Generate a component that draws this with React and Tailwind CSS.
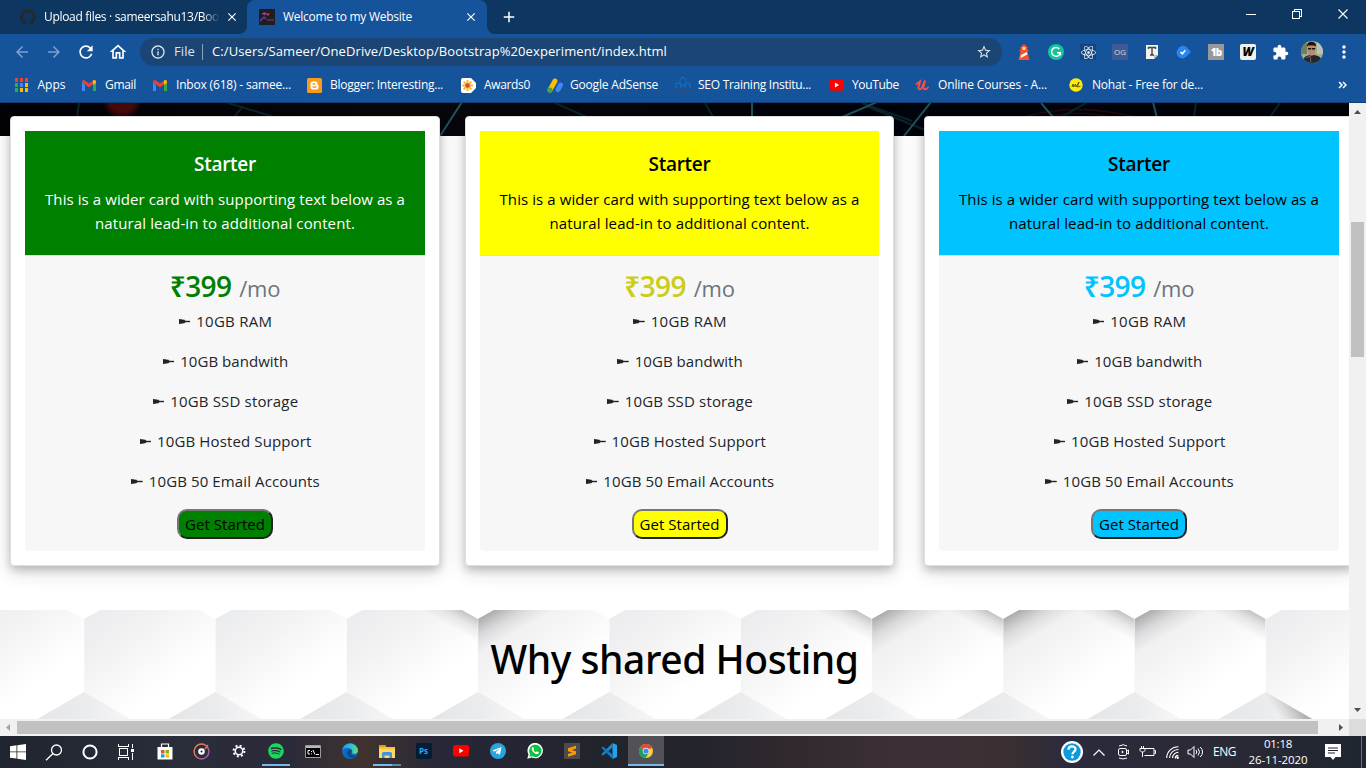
import React, { useLayoutEffect, useRef, useState } from "react";
import {
  MdArrowBack, MdArrowForward, MdRefresh, MdOutlineHome, MdStarBorder, MdInfoOutline,
  MdExtension, MdClose, MdAdd, MdMoreVert,
} from "react-icons/md";
import { FaGithub, FaSpotify, FaReact, FaTelegramPlane } from "react-icons/fa";

/* One line of text whose tracking is tuned so that it spans `w` pixels. */
function Fit({ w, className = "", children }) {
  const ref = useRef(null);
  const [ls, setLs] = useState(0);
  useLayoutEffect(() => {
    const el = ref.current;
    el.style.letterSpacing = "0px";
    const natural = el.getBoundingClientRect().width;
    const next = (w - natural) / el.textContent.length;
    el.style.letterSpacing = `${next}px`;
    setLs(next);
  }, [w]);
  return (
    <span ref={ref} className={`inline-block shrink-0 whitespace-nowrap ${className}`} style={{ letterSpacing: `${ls}px` }}>
      {children}
    </span>
  );
}

/* ---------- browser window ---------- */

function TabStrip() {
  return (
    <div className="flex h-[34px] shrink-0 bg-[#0d3660] text-white">
      <div className="flex w-[247px] items-center pl-5">
        <FaGithub className="size-4 shrink-0 text-[#24292e]" />
        <div className="ml-2 w-[176px] overflow-hidden text-xs [mask-image:linear-gradient(90deg,#000_90%,transparent)]">
          <Fit w={175}>Upload files · sameersahu13/Boo</Fit>
        </div>
        <MdClose className="ml-[5px] size-[14px] shrink-0" />
      </div>
      <div className="relative flex w-[240px] items-center rounded-t-lg bg-[#15539a] pl-3">
        <svg className="absolute -left-2 bottom-0 size-2" viewBox="0 0 8 8"><path d="M8 0v8H0a8 8 0 0 0 8-8z" fill="#15539a" /></svg>
        <svg className="absolute -right-2 bottom-0 size-2" viewBox="0 0 8 8"><path d="M0 0v8h8a8 8 0 0 1-8-8z" fill="#15539a" /></svg>
        <svg className="size-4 shrink-0" viewBox="0 0 16 16">
          <rect width="16" height="16" fill="#1f1d24" />
          <path d="M1 12l4-4 2 2" stroke="#7a3cb0" strokeWidth="1.2" fill="none" />
          <path d="M3 5l3-1 3 2 1-2" stroke="#d8344f" strokeWidth="1.3" fill="none" />
          <path d="M4 4l2 2" stroke="#5063e0" strokeWidth="1.2" />
          <path d="M8 11h7" stroke="#98403f" />
        </svg>
        <Fit w={129} className="ml-2 text-xs">Welcome to my Website</Fit>
        <MdClose className="ml-[52px] size-[14px] shrink-0" />
      </div>
      <div className="flex flex-1 items-center pl-[13px]">
        <MdAdd className="size-[18px]" />
      </div>
      <div className="flex items-start pt-2 pr-[10px]">
        <svg width="116" height="14" viewBox="0 0 116 14" fill="none" stroke="#fff" shapeRendering="crispEdges">
          <path d="M6 6.500h10" />
          <path d="M52.500 3.500h7v7h-7zM54.500 3.500v-2h7v7h-2" />
          <path d="M98.500 1.500l9 9m0-9l-9 9" shapeRendering="auto" strokeWidth="1.1" />
        </svg>
      </div>
    </div>
  );
}

function Extensions() {
  return (
    <div className="ml-[6px] flex items-center text-white">
      <div className="flex w-8 justify-center">
        <svg width="16" height="16" viewBox="0 0 16 16">
          <path d="M4.500 3L8 0l3.500 3v3h1v1.500h-1L13.500 16h-11l2-8.500h-1V6h1z" fill="#f4512c" />
          <rect x="6.500" y="3" width="3" height="3" fill="#ffdf7a" />
          <path d="M5 11l6-3 .3 2.500L4.600 14z" fill="#fff" />
        </svg>
      </div>
      <div className="flex w-8 justify-center">
        <svg width="16" height="16" viewBox="0 0 16 16">
          <circle cx="8" cy="8" r="8" fill="#15c39a" />
          <path d="M11.300 5A4.400 4.400 0 1 0 12.300 8.800H9M12.400 8.800v2.700" stroke="#fff" strokeWidth="1.400" fill="none" />
        </svg>
      </div>
      <div className="flex w-8 justify-center"><div className="flex size-4 items-center justify-center bg-[#134580]"><FaReact className="size-[15px]" /></div></div>
      <div className="flex w-8 justify-center"><div className="flex size-4 items-center justify-center rounded-[2px] bg-[#405a94] text-[8px] text-[#cdd6e8]">OG</div></div>
      <div className="flex w-8 justify-center">
        <svg width="14" height="16" viewBox="0 0 14 16">
          <path d="M1 1h12v10l-4 4H1z" fill="#f2f2f2" /><path d="M9 15v-4h4z" fill="#b9bfc6" />
          <path d="M3.500 5V3.500h7V5M7 3.500V11M5 11h4" stroke="#444" strokeWidth="1.400" fill="none" />
        </svg>
      </div>
      <div className="flex w-8 justify-center">
        <svg width="16" height="14" viewBox="0 0 16 14">
          <path d="M2 4a5.500 5.500 0 0 1 8.500-2L15 7l-4.500 4.500A5.600 5.600 0 0 1 2 4z" fill="#2486f0" />
          <path d="M4.500 7l1.800 1.800 3-3.500" stroke="#fff" strokeWidth="1.500" fill="none" />
        </svg>
      </div>
      <div className="flex w-8 justify-center"><div className="flex size-4 items-center justify-center bg-[#999] text-[10px] font-extrabold tracking-[-1px]">1b</div></div>
      <div className="flex w-8 justify-center"><div className="flex size-4 items-center justify-center rounded-[2px] bg-[#f0f0f0] text-[12px] font-extrabold text-black italic">W</div></div>
      <div className="flex w-8 justify-center"><MdExtension className="size-[17px]" /></div>
      <div className="flex w-8 justify-center">
        <svg width="22" height="22" viewBox="0 0 22 22">
          <defs><clipPath id="avatar"><circle cx="11" cy="11" r="11" /></clipPath></defs>
          <g clipPath="url(#avatar)">
            <rect width="22" height="22" fill="#9fae8d" />
            <rect width="6" height="13" fill="#6f8060" /><rect x="16" width="6" height="13" fill="#b9c3bb" />
            <path d="M2 22c0-6 3-8 9-8s10 2 10 8z" fill="#20252e" />
            <path d="M7 5h7v6c0 5-7 5-7 0z" fill="#c08868" />
            <path d="M6 6c-1-7 10-7 9-.5L13 4.500H7z" fill="#171313" />
            <path d="M7 7h3.200v1.600H7zM11 7h3.200v1.600H11z" fill="#111" />
            <path d="M5 17l4-2 1 6" stroke="#60707c" fill="none" />
          </g>
        </svg>
      </div>
      <div className="flex w-8 justify-center"><MdMoreVert className="size-5" /></div>
    </div>
  );
}

function Toolbar() {
  return (
    <div className="flex h-9 shrink-0 items-center bg-[#15539a] text-white">
      <MdArrowBack className="ml-[13px] size-[18px] text-[#7ea2cc]" />
      <MdArrowForward className="ml-[14px] size-[18px] text-[#7ea2cc]" />
      <MdRefresh className="ml-[13px] size-[20px]" />
      <MdOutlineHome className="ml-[12px] size-[20px]" />
      <div className="ml-[12px] flex h-7 w-[862px] items-center rounded-full bg-[#1a4574] pl-[10px]">
        <MdInfoOutline className="size-4 text-[#dce4ee]" />
        <Fit w={21} className="ml-2 text-[13px] text-[#dce4ee]">File</Fit>
        <div className="mr-[9px] ml-[7px] h-4 w-px bg-[#8ba1bb]" />
        <Fit w={455} className="text-[13px]">C:/Users/Sameer/OneDrive/Desktop/Bootstrap%20experiment/index.html</Fit>
        <MdStarBorder className="mr-[10px] ml-auto size-4 text-[#dce4ee]" />
      </div>
      <Extensions />
    </div>
  );
}

const Gmail = () => (
  <svg width="14" height="11" viewBox="0 0 14 11">
    <path d="M0 1.500V11h3V5z" fill="#4285f4" /><path d="M14 1.500V11h-3V5z" fill="#34a853" />
    <path d="M0 2a1.800 1.800 0 0 1 3-1.500l4 3 4-3A1.800 1.800 0 0 1 14 2l-7 5.500z" fill="#ea4335" />
    <path d="M11 .5A1.800 1.800 0 0 1 14 2v1l-3 2z" fill="#fbbc04" />
  </svg>
);

const APPS_COLORS = ["#ea4335", "#ea4335", "#ea4335", "#34a853", "#4285f4", "#fbbc04", "#34a853", "#fbbc04", "#fbbc04"];
const AppsIcon = () => (
  <svg className="ml-px" width="13" height="14" viewBox="0 0 13 14" shapeRendering="crispEdges">
    {APPS_COLORS.map((c, i) => <rect key={i} x={(i % 3) * 5} y={Math.floor(i / 3) * 5} width="3" height="4" fill={c} />)}
  </svg>
);
const Blogger = () => (
  <svg width="15" height="15" viewBox="0 0 15 15">
    <rect width="15" height="15" rx="1.500" fill="#f89a1c" />
    <path d="M6 3.500h2.500a2.200 2.200 0 0 1 2 2.500c0 .7 1 .5 1 1.500v1.500a2.500 2.500 0 0 1-2.500 2.500H6A2.500 2.500 0 0 1 3.500 9V6A2.500 2.500 0 0 1 6 3.500z" fill="#fff" />
    <path d="M6 6h2M6 9h3" stroke="#f89a1c" strokeWidth="1.300" strokeLinecap="round" />
  </svg>
);
const Awards = () => (
  <svg width="15" height="15" viewBox="0 0 15 15">
    <path d="M2 0h8l5 5v5l-5 5H2a2 2 0 0 1-2-2V2a2 2 0 0 1 2-2z" fill="#fff" />
    <path d="M6.500 2v11M1 7.500h11M2.600 3.600l7.800 7.800M10.400 3.600l-7.800 7.800" stroke="#f9b91c" strokeWidth="1.900" />
    <circle cx="6.500" cy="7.500" r="2.200" fill="#e2492f" />
  </svg>
);
const AdSense = () => (
  <svg width="17" height="15" viewBox="0 0 17 15">
    <path d="M8 3L3 12" stroke="#fbbc04" strokeWidth="5" strokeLinecap="round" />
    <path d="M13.500 7L11 11.700" stroke="#4285f4" strokeWidth="5" strokeLinecap="round" />
    <circle cx="3" cy="12" r="2.600" fill="#34a853" />
  </svg>
);
const Seo = () => (
  <svg width="16" height="16" viewBox="0 0 16 16" fill="none" stroke="#0c79c9">
    <path d="M5 7V2.500Q8-1.500 11 2.500V7L8 9zM1 11V6.500q3-1.500 5 1.500v3M15 11V6.500q-3-1.500-5 1.500v3" />
    <path d="M0 14h16" stroke="#32516f" strokeWidth="2.500" strokeDasharray="2 .7" />
  </svg>
);
const YouTube = () => (
  <svg width="15" height="12" viewBox="0 0 16 12"><rect width="16" height="12" rx="3" fill="#f00" /><path d="M6.300 3.300v5.400L10.700 6z" fill="#fff" /></svg>
);
const Udemy = () => (
  <svg width="15" height="12" viewBox="0 0 15 12" fill="none" stroke="#ea5252" strokeWidth="2" strokeLinecap="round">
    <path d="M1.500 5L5 2.500 3.500 8c-.6 3 2 2.800 3.500.5L10 1.500 8.500 8c-.5 3 2.500 3 4.500.5" />
  </svg>
);
const Nohat = () => (
  <svg width="14" height="14" viewBox="0 0 14 14">
    <circle cx="7" cy="7" r="6.700" fill="#ffee00" />
    <path d="M3 9l1-3 .7 3L6.500 6l.5 3 3-5-1.500 5 3-.6" stroke="#3c3a10" strokeWidth=".8" fill="none" />
  </svg>
);

const BOOKMARKS = [
  { icon: <AppsIcon />, label: "Apps", w: 28, cell: "w-[67.500px]" },
  { icon: <Gmail />, label: "Gmail", w: 31, cell: "w-[71px]" },
  { icon: <Gmail />, label: "Inbox (618) - samee...", w: 115, cell: "w-[154px]" },
  { icon: <Blogger />, label: "Blogger: Interesting...", w: 113, cell: "w-[154px]" },
  { icon: <Awards />, label: "Awards0", w: 46, cell: "w-[86px]" },
  { icon: <AdSense />, label: "Google AdSense", w: 88, cell: "w-[128px]" },
  { icon: <Seo />, label: "SEO Training Institu...", w: 113, cell: "w-[154px]" },
  { icon: <YouTube />, label: "YouTube", w: 47, cell: "w-[86px]" },
  { icon: <Udemy />, label: "Online Courses - A...", w: 109, cell: "w-[154px]" },
  { icon: <Nohat />, label: "Nohat - Free for de...", w: 111, cell: "w-[269.500px]" },
];

function Bookmarks() {
  return (
    <div className="flex h-[33px] shrink-0 items-center border-b border-[#103f77] bg-[#15539a] pb-[2px] pl-[14px] text-xs text-white">
      {BOOKMARKS.map((b) => (
        <div key={b.label} className={`flex shrink-0 items-center ${b.cell}`}>
          <div className="flex w-[23.500px] shrink-0 items-center">{b.icon}</div>
          <Fit w={b.w} className="pb-px">{b.label}</Fit>
        </div>
      ))}
      <svg width="9" height="8" viewBox="0 0 9 8" fill="none" stroke="#fff" strokeWidth="1.500"><path d="M1 1l3 3-3 3M5 1l3 3-3 3" /></svg>
    </div>
  );
}

/* ---------- page ---------- */

function HeroEdge() {
  return (
    <svg className="absolute top-0 left-0" width="1349" height="33" viewBox="0 0 1349 33" fill="none">
      <defs>
        <linearGradient id="hero" x1="0" x2="1"><stop offset="0" stopColor="#020207" /><stop offset=".3" stopColor="#08070b" /><stop offset=".6" stopColor="#03040b" /><stop offset="1" stopColor="#01040b" /></linearGradient>
        <radialGradient id="ember"><stop offset=".6" stopColor="#470a0b" /><stop offset="1" stopColor="#470a0b" stopOpacity="0" /></radialGradient>
      </defs>
      <rect width="1349" height="33" fill="url(#hero)" />
      <circle cx="122" cy="-3" r="20" fill="url(#ember)" />
      <path d="M1010 18Q1070-3 1135 14M1035 18Q1070 5 1110 14" stroke="#26080f" strokeWidth="1.500" />
      <g stroke="#0a2429" strokeWidth="2">
        <path d="M79 0l-2 14M228 0l46 14M243 3l-8 10M555 0l32 14M705 0l8 14M866 3l64 26M862 0l50 18M1086 0l-26 15M1196 0l-2 14M1280 0l-10 14" />
      </g>
      <g stroke="#1f525d" strokeWidth="2">
        <path d="M462-1l-22 34M752 0v14M877-1l-37 16M931-1l-27 34M1041 0l12 14M1153-1l4 16" />
      </g>
    </svg>
  );
}

const FEATURES = [
  ["10GB RAM", 76],
  ["10GB bandwith", 108],
  ["10GB SSD storage", 128],
  ["10GB Hosted Support", 154.5],
  ["10GB 50 Email Accounts", 171],
];

function PlanCard({ className, head, price, button }) {
  return (
    <div className={`h-[450px] shrink-0 rounded bg-white p-[14px] shadow-[0_4px_8px_0_rgba(0,0,0,0.2),0_6px_20px_0_rgba(0,0,0,0.14)] border border-[#dfdfdf] ${className}`}>
      <div className={`flex h-[124px] flex-col items-center pt-[21px] ${head}`}>
        <Fit w={62} className="text-[19px] leading-6 font-semibold">Starter</Fit>
        <Fit w={360} className="mt-[11px] text-[15px] leading-6">This is a wider card with supporting text below as a</Fit>
        <Fit w={260} className="text-[15px] leading-6">natural lead-in to additional content.</Fit>
      </div>
      <div className="flex h-[296px] flex-col items-center rounded-b border-t border-[#dcdcdc] bg-[#f7f7f7] pt-[13px]">
        <div className="flex h-[34px] items-baseline gap-2">
          <Fit w={61.5} className={`text-[28px] leading-[34px] font-semibold ${price}`}>₹399</Fit>
          <Fit w={41} className="text-[22px] leading-[34px] text-[#6c757d]">/mo</Fit>
        </div>
        <ul className="mt-[6px] flex flex-col items-center gap-4 pl-px text-[#212529]">
          {FEATURES.map(([label, w]) => (
            <li key={label} className="flex h-6 items-center gap-[6px]">
              <svg width="11.500" height="5" viewBox="0 0 11.500 5" fill="#212529"><path d="M0 0L6 1.200V2h5.500v1H6v.8L0 5z" stroke="#212529" strokeWidth=".4" /></svg>
              <Fit w={w} className="text-[15px] leading-6">{label}</Fit>
            </li>
          ))}
        </ul>
        <div className={`mt-4 flex h-[30px] w-[96px] items-center justify-center rounded-[10px] border-2 border-t-[#767676] border-r-[#212121] border-b-[#212121] border-l-[#767676] text-black ${button}`}>
          <Fit w={80} className="text-[15px]">Get Started</Fit>
        </div>
      </div>
    </div>
  );
}

const CELL = 131.3;
const SHADE_LEFT = [3, 6, 7, 8];
const SHADE_RIGHT = [2, 5, 6, 7, 8];
const CELLS = [-1, 0, 1, 2, 3, 4, 5, 6, 7, 8, 9];
const HEX = "M0 9l65.650-37 65.650 37v73l-65.650 38-65.650-38z";

function Honeycomb() {
  return (
    <svg className="absolute inset-0" width="1349" height="109" viewBox="0 0 1349 109">
      <defs>
        <linearGradient id="cell" gradientUnits="userSpaceOnUse" x1="0" y1="10" x2="68" y2="100">
          <stop offset="0" stopColor="#ebecee" /><stop offset=".35" stopColor="#f2f2f3" /><stop offset=".9" stopColor="#fff" />
        </linearGradient>
        <linearGradient id="lower" gradientUnits="userSpaceOnUse" x1="-40" y1="0" x2="48" y2="0">
          <stop offset="0" stopColor="#e5e6e8" /><stop offset=".5" stopColor="#ebecee" /><stop offset="1" stopColor="#f7f7f7" />
        </linearGradient>
        <linearGradient id="dark" gradientUnits="userSpaceOnUse" x1="4" y1="7" x2="19" y2="33">
          <stop offset="0" stopColor="#777" stopOpacity=".55" /><stop offset=".5" stopColor="#888" stopOpacity=".2" /><stop offset="1" stopColor="#999" stopOpacity="0" />
        </linearGradient>
        <linearGradient id="darkRight" gradientUnits="userSpaceOnUse" x1="125" y1="5" x2="115" y2="23">
          <stop offset="0" stopColor="#777" stopOpacity=".42" /><stop offset=".5" stopColor="#999" stopOpacity=".17" /><stop offset="1" stopColor="#999" stopOpacity="0" />
        </linearGradient>
        <linearGradient id="edge" gradientUnits="userSpaceOnUse" x1="36" y1="101" x2="17" y2="113">
          <stop offset="0" stopColor="#777" stopOpacity=".55" /><stop offset="1" stopColor="#999" stopOpacity="0" />
        </linearGradient>
      </defs>
      <rect width="1349" height="109" fill="#fff" />
      {CELLS.map((i) => (
        <path key={i} transform={`translate(${84 + i * CELL} 0)`} d="M0 81l49 28h-98z" fill="url(#lower)" />
      ))}
      <path transform="translate(1265.700 0)" d="M0 81l49 28h-98z" fill="url(#edge)" />
      {CELLS.map((i) => (
        <g key={i} transform={`translate(${84 + i * CELL} 0)`}>
          <path d={HEX} fill="url(#cell)" />
          {SHADE_LEFT.includes(i) && <path d={HEX} fill="url(#dark)" />}
          {SHADE_RIGHT.includes(i) && <path d={HEX} fill="url(#darkRight)" />}
          <path d="M0 9v73" stroke="#fff" strokeOpacity=".45" />
        </g>
      ))}
    </svg>
  );
}

function Page() {
  return (
    <div className="relative flex min-w-0 flex-1 flex-col overflow-hidden bg-white">
      <HeroEdge />
      <div className="relative flex h-[507px] shrink-0 items-start pt-[13px] pl-[10px]">
        <PlanCard className="w-[430px]" head="bg-[#008000] text-white" price="text-[#008000]" button="bg-[#008000]" />
        <PlanCard className="ml-[25px] w-[429px]" head="bg-[#ffff00] text-black" price="text-[#cccc1b]" button="bg-[#ffff00]" />
        <PlanCard className="ml-[30px] w-[430px]" head="bg-[#00c3ff] text-black" price="text-[#00c3ff]" button="bg-[#00c3ff]" />
      </div>
      <div className="relative flex h-[109px] shrink-0 justify-center overflow-hidden">
        <Honeycomb />
        <Fit w={368} className="relative mt-[25px] text-[39px] leading-[48px] font-medium text-black font-['Noto_Sans','Open_Sans',sans-serif]">Why shared Hosting</Fit>
      </div>
    </div>
  );
}

function VerticalScrollbar() {
  return (
    <div className="flex w-[17px] shrink-0 flex-col items-center bg-[#f1f1f1] pt-[7px]">
      <svg width="7" height="4" viewBox="0 0 7 4"><path d="M0 4l3.500-4L7 4z" fill="#505050" /></svg>
      <div className="mt-[108px] h-[135px] w-[13px] bg-[#c1c1c1]" />
      <svg className="mt-[351px]" width="7" height="4" viewBox="0 0 7 4"><path d="M0 0l3.500 4L7 0z" fill="#505050" /></svg>
    </div>
  );
}

function HorizontalScrollbar() {
  return (
    <div className="flex h-[17px] shrink-0 items-center bg-[#f1f1f1]">
      <svg className="ml-[6px]" width="4" height="7" viewBox="0 0 4 7"><path d="M4 0L0 3.500 4 7z" fill="#a3a3a3" /></svg>
      <div className="ml-[7px] h-[13px] w-[1301px] bg-[#c1c1c1]" />
      <svg className="ml-[21px]" width="4" height="7" viewBox="0 0 4 7"><path d="M0 0l4 3.500L0 7z" fill="#505050" /></svg>
      <div className="ml-auto h-full w-[17px] bg-[#dcdcdc]" />
    </div>
  );
}

/* ---------- taskbar ---------- */

const START = [
  <svg width="16" height="16" viewBox="0 0 16 16" fill="#fff"><path d="M0 2.200l6.500-.9v6.200H0zM7.300 1.200L16 0v7.500H7.300zM0 8.300h6.500v6.300L0 13.700zM7.300 8.300H16V16l-8.700-1.200z" /></svg>,
  <svg width="18" height="17" viewBox="0 0 18 17" fill="none" stroke="#fff" strokeWidth="1.300"><circle cx="11.500" cy="6" r="5" /><path d="M8 9.500L1 16.300" /></svg>,
  <svg width="16" height="16" viewBox="0 0 16 16" fill="none" stroke="#fff" strokeWidth="2"><circle cx="8" cy="8" r="6.600" /></svg>,
  <svg width="17" height="16" viewBox="0 0 17 16" fill="none" stroke="#fff" shapeRendering="crispEdges"><path d="M.5 0v2.500h10V0M.5 16v-2.500h10V16M1.500 4.500h8v7h-8zM14.500 0v4M14.500 9v7" /><path d="M13 4.500h3v3h-3z" fill="#fff" stroke="none" /></svg>,
];

const PINNED = [
  <svg width="16" height="17" viewBox="0 0 16 17"><path d="M4.500 4V1h7v3" stroke="#fff" strokeWidth="1.200" fill="none" /><path d="M.5 4h15v12.500H.5z" fill="#fff" /><path d="M4 7h3.500v3.500H4z" fill="#f25022" /><path d="M8.500 7H12v3.500H8.500z" fill="#7fba00" /><path d="M4 11.300h3.500v3.200H4z" fill="#00a4ef" /><path d="M8.500 11.300H12v3.200H8.500z" fill="#ffb900" /></svg>,
  <svg width="17" height="17" viewBox="0 0 17 17" fill="none"><defs><linearGradient id="groove" x1="0" y1="0" x2="1" y2="1"><stop stopColor="#f08a3c" /><stop offset=".5" stopColor="#d06a72" /><stop offset="1" stopColor="#7a55c8" /></linearGradient></defs><circle cx="8.500" cy="8.500" r="7.400" stroke="url(#groove)" strokeWidth="1.500" /><circle cx="8.500" cy="8.500" r="2.200" stroke="#fff" strokeWidth="2.200" /><path d="M12 6l3-4" stroke="#e07050" strokeWidth="1.500" /></svg>,
  <svg width="14" height="14" viewBox="0 0 14 14" fill="none" stroke="#fff"><circle cx="7" cy="7" r="3.700" strokeWidth="1.500" /><circle cx="7" cy="7" r="5.400" strokeWidth="2" strokeDasharray="2 2.240" /></svg>,
  <FaSpotify className="size-4 text-[#1ed760]" />,
  <svg width="16" height="13" viewBox="0 0 16 13"><path d="M.5.500h15v12H.5z" fill="#000" stroke="#9a9a9a" /><path d="M1 1h14v2H1z" fill="#b5b8be" /><path d="M5 5.500H3V9h2M6.500 6v1M6.500 8.500v.8M8 5l2 4.500M11 9.500h3" stroke="#fff" fill="none" /></svg>,
  <svg width="16" height="16" viewBox="0 0 16 16"><defs><linearGradient id="edgeTop"><stop stopColor="#1b9de2" /><stop offset=".6" stopColor="#35c1d0" /><stop offset="1" stopColor="#6ae25c" /></linearGradient></defs><circle cx="8" cy="8" r="8" fill="#0c6cc0" /><path d="M.2 7a8 8 0 0 1 15.800.5c0 3-3 4-5.500 3-1-.5 0-1-.2-2.200C9.700 5 4 3.800.2 7z" fill="url(#edgeTop)" /><path d="M5 9.500c0-3 4-4 5-1.500-1 .5-1.500 3 .5 4s4 .5 5-.3C13 16.500 5 16 5 9.500z" fill="#114a8b" /></svg>,
  <svg width="16" height="15" viewBox="0 0 16 15"><path d="M0 1h6l1.500 2H16v11H0z" fill="#f9c22e" /><path d="M0 1h6l1 2H0z" fill="#e0980c" /><path d="M0 5h16v9H0z" fill="#ffd768" /><path d="M3 14V9.500A1.500 1.500 0 0 1 4.500 8h7A1.500 1.500 0 0 1 13 9.500V14h-2.500v-2.500h-5V14z" fill="#3f96dc" /></svg>,
  <div className="flex size-4 items-center justify-center rounded-[2px] bg-[#001e36] text-[8px] font-bold text-[#31a8ff]">Ps</div>,
  <svg width="16" height="12" viewBox="0 0 16 12"><rect width="16" height="11.500" rx="2.500" fill="#f00" /><path d="M6.300 3.200v5L10.500 5.700z" fill="#fff" /></svg>,
  <div className="flex size-4 items-center justify-center rounded-full bg-[#29a4de] text-white"><FaTelegramPlane className="mr-px size-[10px]" /></div>,
  <div className="flex size-4 items-center justify-center">
    <svg width="16" height="16" viewBox="0 0 17 17"><path d="M.3 16.700l1.300-4.500A8.200 8.200 0 1 1 5 15.400z" fill="#fff" /><path d="M2.500 14.600l.8-2.700a6.600 6.600 0 1 1 2.300 2.200z" fill="#0dc143" /><path d="M5.500 4.500c-2 3 3 8.500 6.500 7l.6-1.700-2-1-1 1C8 9.500 7 8 6.800 7.300l.8-1-.8-1.800z" fill="#fff" /></svg>
  </div>,
  <svg width="16" height="16" viewBox="0 0 16 16"><rect width="16" height="16" rx="1" fill="#4b4b4b" /><path d="M12 2.800v2.700L7.700 6.900 12 8.200v3L4 13.700v-2.700l4.300-1.500L4 8.200v-3z" fill="#ff9800" /></svg>,
  <svg width="16" height="16" viewBox="0 0 16 16"><path d="M11.500 0L16 2v12l-4.500 2z" fill="#24a2ec" /><path d="M11.500 0v4.500L2 12.500.3 11.200z" fill="#1587d0" /><path d="M.3 4.800L2 3.500l9.500 8V16z" fill="#1178c4" /></svg>,
];

const Chrome = () => (
  <svg width="14" height="14" viewBox="0 0 14 14">
    <circle cx="7" cy="7" r="7" fill="#ffcd40" />
    <path d="M7 7L.9 3.500A7 7 0 0 1 13.100 3.500z" fill="#e2493b" /><path d="M7 3.500h6.100V4H7z" fill="#e2493b" />
    <path d="M.9 3.500a7 7 0 0 0 5.500 10.500L10 8.700 7 7z" fill="#19a15f" />
    <circle cx="7" cy="7" r="3.300" fill="#f1f1f1" /><circle cx="7" cy="7" r="2.600" fill="#4a86e8" />
  </svg>
);

function Taskbar() {
  return (
    <div className="flex h-8 shrink-0 bg-[linear-gradient(90deg,#1f252e_0px,#2a2d3a_180px,#2b2a39_290px,#40332f_365px,#272738_440px,#22242c_600px,#24242d_700px,#31292d_790px,#3b3037_900px,#3a2f32_1010px,#2b2a3d_1070px,#2c2a36_1200px,#1f2630_1366px)] text-white">
      {START.map((icon, i) => (
        <div key={i} className="flex w-9 items-center justify-center">{icon}</div>
      ))}
      <div className="w-[2px]" />
      {PINNED.map((icon, i) => (
        <div key={i} className="flex w-[37px] flex-col items-center">
          <div className="flex h-7 items-center pt-[2px]">{icon}</div>
          {(i === 3 || i === 6) && (
            <div className="flex h-[2px] w-7 bg-[#76b9ed]">{i === 6 && <div className="ml-auto w-[9px] bg-[#5a8bb5]" />}</div>
          )}
        </div>
      ))}
      <div className="ml-px flex h-[30px] w-9 flex-col items-center border-b-2 border-[#76b9ed] bg-[#525158] pt-2"><Chrome /></div>
      <div className="ml-auto flex items-center">
        <svg width="24" height="24" viewBox="0 0 24 24"><circle cx="12" cy="12" r="11" fill="#fff" /><circle cx="12" cy="12" r="8.700" fill="#0b9bdc" /><path d="M8.500 9.700c0-4.500 7-4.200 7-.5 0 2.500-3 2.500-3 5" stroke="#fff" strokeWidth="2.300" fill="none" /><circle cx="12.400" cy="17" r="1.400" fill="#fff" /></svg>
        <svg className="ml-[9px]" width="12" height="7" viewBox="0 0 12 7" fill="none" stroke="#fff" strokeWidth="1.200"><path d="M.5 6.500l5.500-5.500 5.500 5.500" /></svg>
        <svg className="ml-[13px]" width="12" height="16" viewBox="0 0 12 16" fill="none" stroke="#fff"><rect x=".5" y="4.500" width="8" height="7" rx="1.500" /><path d="M9 7l1.500-1v4L9 9M1 2Q5.500-.5 9 2M1 14q4 2 8 0" /><circle cx="4.500" cy="8" r=".7" fill="#fff" /></svg>
        <svg className="ml-[9px]" width="17" height="12" viewBox="0 0 17 12" fill="none" stroke="#fff"><path d="M6 2.500h9v7H5.500M15.500 4.500h1v3h-1M2.500 0v2.500M4.500 0v2.500M1 2.500h5v2L4.500 6h-2L1 4.500zM3.500 6v5" /></svg>
        <svg className="ml-[10px]" width="14" height="13" viewBox="0 0 14 13" fill="none" stroke="#fff"><path d="M.7 12A11.500 11.500 0 0 1 12.500.7M3.500 12A8.800 8.800 0 0 1 12.500 3.500M6.500 12A6 6 0 0 1 12.500 6.300" strokeWidth="1.100" /><path d="M9.300 12.500a3 3 0 0 1 3-3" strokeWidth="1.300" /><circle cx="11.700" cy="11.700" r="1.200" fill="#fff" stroke="none" /></svg>
        <svg className="ml-[7px]" width="17" height="14" viewBox="0 0 17 14" fill="none" stroke="#fff"><path d="M1 5h2.500L7 1.500v11L3.500 9H1zM9 5q1.500 2 0 4M11 3.500q3 3.500 0 7M13.300 2q4.500 5 0 10" /></svg>
        <Fit w={23} className="ml-[9px] text-xs">ENG</Fit>
        <div className="ml-[12px] flex w-[60px] flex-col items-center text-[11.500px] leading-[16px]">
          <Fit w={28}>01:18</Fit>
          <Fit w={59}>26-11-2020</Fit>
        </div>
        <svg className="ml-[17px]" width="16" height="16" viewBox="0 0 16 16"><path d="M0 0h16v13h-5.500L8 16l-2.500-3H0z" fill="#fff" /><path d="M3 4h10M3 6.500h10M3 9h7" stroke="#24242d" strokeWidth="1.100" /></svg>
        <div className="mr-1 ml-[20px] h-8 w-px bg-[#6c6d76]" />
      </div>
    </div>
  );
}

export default function App() {
  return (
    <div className="flex h-[768px] w-[1366px] flex-col overflow-hidden font-['Open_Sans','Noto_Sans',sans-serif]">
      <TabStrip />
      <Toolbar />
      <Bookmarks />
      <div className="flex h-[616px] shrink-0">
        <Page />
        <VerticalScrollbar />
      </div>
      <HorizontalScrollbar />
      <Taskbar />
    </div>
  );
}
